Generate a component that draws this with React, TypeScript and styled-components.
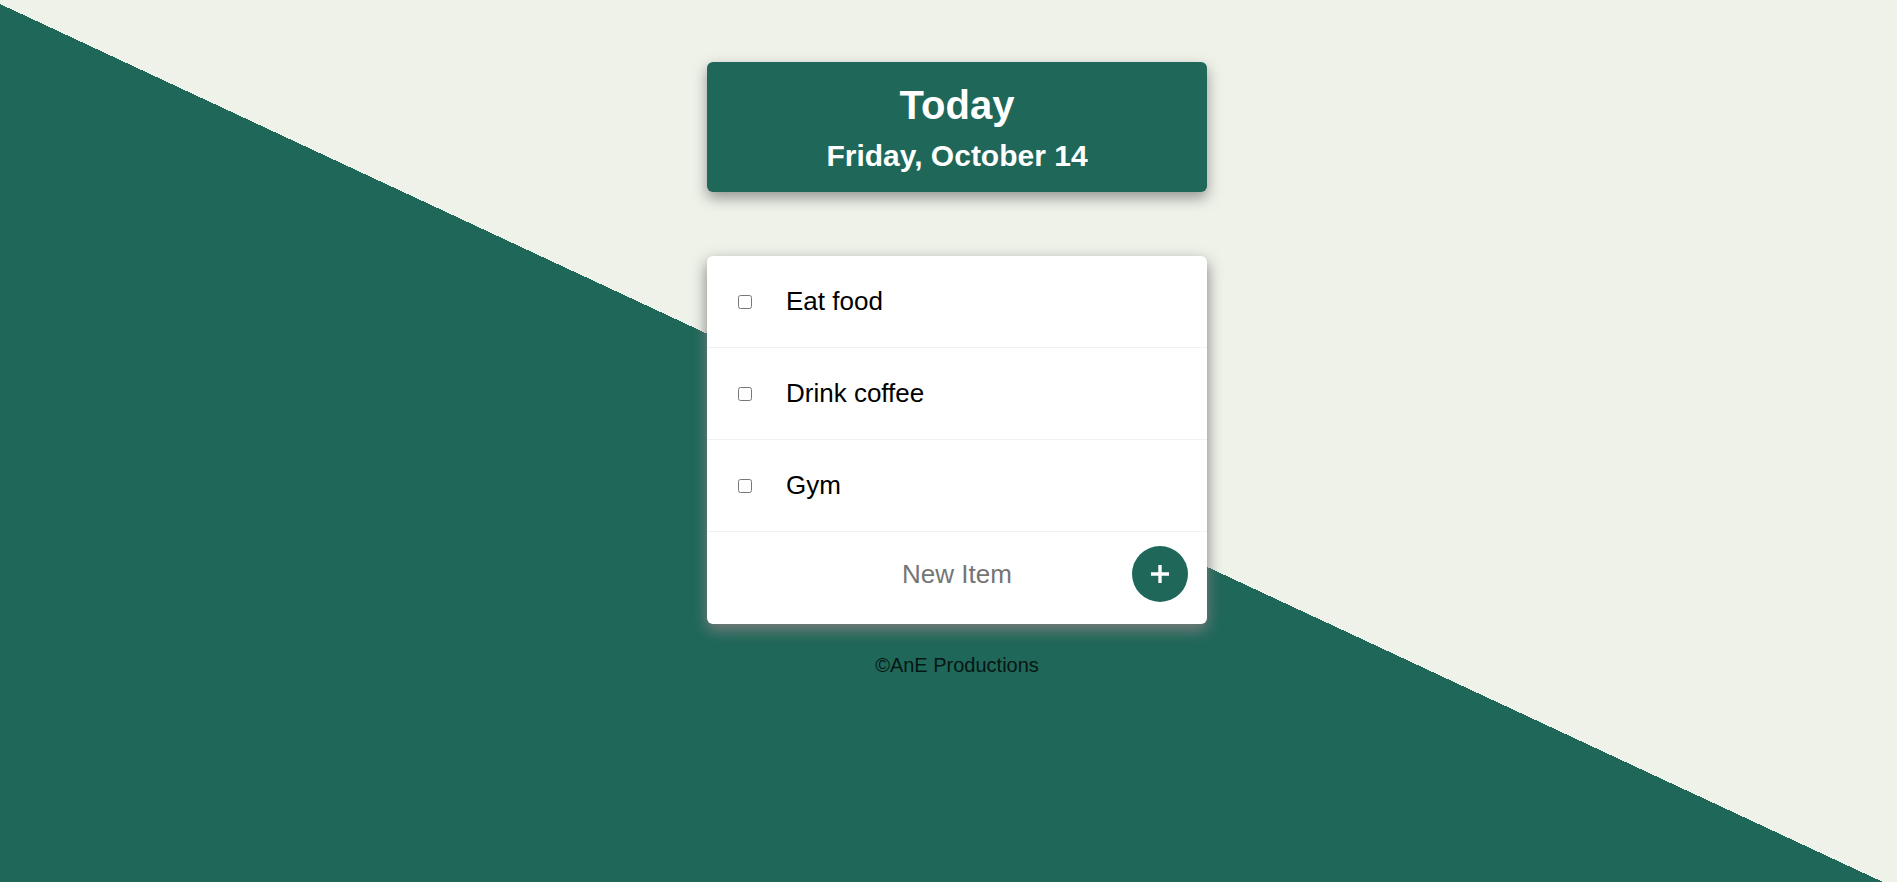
import { FC } from "react";
import { createGlobalStyle, styled } from "styled-components";

const colors = {
  green: "#1e6759",
  paper: "#eef2e8",
  divider: "#f1f1f1",
  text: "#000000",
  placeholder: "#757575",
};

const GlobalStyle = createGlobalStyle`
  html {
    min-height: 100vh;
    background-color: ${colors.paper};
    background-image: linear-gradient(25deg, ${colors.green} 49.7%, ${colors.paper} 49.7%);
  }

  body {
    margin: 0;
    font-family: "Liberation Sans", Arial, sans-serif;
  }
`;

const Page = styled.main`
  display: flex;
  flex-direction: column;
  align-items: center;
  padding: 62px 0 0 17px;
`;

const Heading = styled.header`
  box-sizing: border-box;
  width: 500px;
  padding: 23px 0 21px;
  display: flex;
  flex-direction: column;
  align-items: center;
  gap: 16px;
  background-color: ${colors.green};
  border-radius: 6px;
  box-shadow: 0 6px 14px rgba(120, 120, 120, 0.75);
  color: #fff;
`;

const Title = styled.h1<{ $size: number }>`
  margin: 0;
  font-size: ${(p) => p.$size}px;
  line-height: 1;
  font-weight: 700;
`;

const Card = styled.section`
  width: 500px;
  margin-top: 64px;
  background-color: #fff;
  border-radius: 6px;
  box-shadow: 0 6px 15px rgba(125, 125, 125, 1);
  overflow: hidden;
`;

const Item = styled.label`
  height: 91px;
  display: flex;
  align-items: center;
  border-bottom: 1px solid ${colors.divider};
`;

const Check = styled.input`
  width: 14px;
  height: 14px;
  margin: 0 34px 0 31px;
`;

const ItemText = styled.p`
  margin: 0;
  font-size: 26px;
  color: ${colors.text};
`;

const NewItemForm = styled.form`
  box-sizing: border-box;
  height: 92px;
  padding: 0 19px 8px 75px;
  display: flex;
  align-items: center;
`;

const NewItemInput = styled.input`
  width: 350px;
  padding: 0;
  border: none;
  background: transparent;
  outline: none;
  text-align: center;
  font-family: inherit;
  font-size: 26px;
  color: ${colors.text};

  &::placeholder {
    color: ${colors.placeholder};
  }
`;

const AddButton = styled.button`
  width: 56px;
  height: 56px;
  padding: 0;
  border: none;
  border-radius: 50%;
  background-color: ${colors.green};
  display: flex;
  align-items: center;
  justify-content: center;
  cursor: pointer;
`;

const Footer = styled.footer`
  margin-top: 30px;
  font-size: 20px;
  color: rgba(0, 0, 0, 0.8);
  text-align: center;
`;

const items = ["Eat food", "Drink coffee", "Gym"];

const App: FC = () => {
  return (
    <>
      <GlobalStyle />
      <Page>
        <Heading>
          <Title $size={40}>Today</Title>
          <Title $size={30}>Friday, October 14</Title>
        </Heading>
        <Card>
          {items.map((item) => (
            <Item key={item}>
              <Check type="checkbox" />
              <ItemText>{item}</ItemText>
            </Item>
          ))}
          <NewItemForm onSubmit={(e) => e.preventDefault()}>
            <NewItemInput type="text" placeholder="New Item" autoComplete="off" />
            <AddButton type="submit" aria-label="Add item">
              <svg width="20" height="20" viewBox="0 0 20 20">
                <path d="M10 1v18M1 10h18" stroke="#fff" strokeWidth="3.4" fill="none" />
              </svg>
            </AddButton>
          </NewItemForm>
        </Card>
        <Footer>©AnE Productions</Footer>
      </Page>
    </>
  );
};

export default App;
